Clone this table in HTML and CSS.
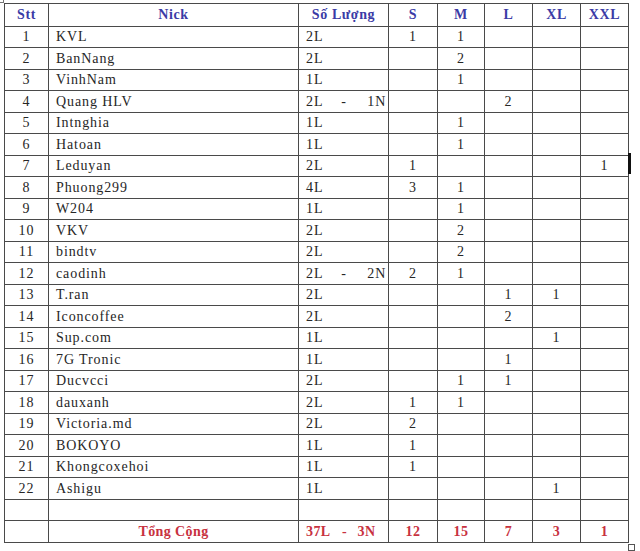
FILE: index.html
```html
<!DOCTYPE html>
<html lang="vi">
<head>
<meta charset="utf-8">
<title>Bảng size</title>
<link rel="stylesheet" href="styles.css">
</head>
<body>
<div class="page">
  <span class="move-handle"></span>
  <table class="sheet">
    <colgroup>
      <col class="c-stt"><col class="c-nick"><col class="c-qty"><col class="c-s"><col class="c-m"><col class="c-l"><col class="c-xl"><col class="c-xxl">
    </colgroup>
    <thead>
      <tr class="head">
        <th>Stt</th><th>Nick</th><th>Số Lượng</th><th>S</th><th>M</th><th>L</th><th>XL</th><th>XXL</th>
      </tr>
    </thead>
    <tbody>
      <tr><td class="n">1</td><td class="t">KVL</td><td class="q">2L</td><td class="n">1</td><td class="n">1</td><td></td><td></td><td></td></tr>
      <tr><td class="n">2</td><td class="t">BanNang</td><td class="q">2L</td><td></td><td class="n">2</td><td></td><td></td><td></td></tr>
      <tr><td class="n">3</td><td class="t">VinhNam</td><td class="q">1L</td><td></td><td class="n">1</td><td></td><td></td><td></td></tr>
      <tr><td class="n">4</td><td class="t">Quang HLV</td><td class="q">2L<span class="dash">-</span>1N</td><td></td><td></td><td class="n">2</td><td></td><td></td></tr>
      <tr><td class="n">5</td><td class="t">Intnghia</td><td class="q">1L</td><td></td><td class="n">1</td><td></td><td></td><td></td></tr>
      <tr><td class="n">6</td><td class="t">Hatoan</td><td class="q">1L</td><td></td><td class="n">1</td><td></td><td></td><td></td></tr>
      <tr><td class="n">7</td><td class="t">Leduyan</td><td class="q">2L</td><td class="n">1</td><td></td><td></td><td></td><td class="n">1</td></tr>
      <tr><td class="n">8</td><td class="t">Phuong299</td><td class="q">4L</td><td class="n">3</td><td class="n">1</td><td></td><td></td><td></td></tr>
      <tr><td class="n">9</td><td class="t">W204</td><td class="q">1L</td><td></td><td class="n">1</td><td></td><td></td><td></td></tr>
      <tr><td class="n">10</td><td class="t">VKV</td><td class="q">2L</td><td></td><td class="n">2</td><td></td><td></td><td></td></tr>
      <tr><td class="n">11</td><td class="t">bindtv</td><td class="q">2L</td><td></td><td class="n">2</td><td></td><td></td><td></td></tr>
      <tr><td class="n">12</td><td class="t">caodinh</td><td class="q">2L<span class="dash">-</span>2N</td><td class="n">2</td><td class="n">1</td><td></td><td></td><td></td></tr>
      <tr><td class="n">13</td><td class="t">T.ran</td><td class="q">2L</td><td></td><td></td><td class="n">1</td><td class="n">1</td><td></td></tr>
      <tr><td class="n">14</td><td class="t">Iconcoffee</td><td class="q">2L</td><td></td><td></td><td class="n">2</td><td></td><td></td></tr>
      <tr><td class="n">15</td><td class="t">Sup.com</td><td class="q">1L</td><td></td><td></td><td></td><td class="n">1</td><td></td></tr>
      <tr><td class="n">16</td><td class="t">7G Tronic</td><td class="q">1L</td><td></td><td></td><td class="n">1</td><td></td><td></td></tr>
      <tr><td class="n">17</td><td class="t">Ducvcci</td><td class="q">2L</td><td></td><td class="n">1</td><td class="n">1</td><td></td><td></td></tr>
      <tr><td class="n">18</td><td class="t">dauxanh</td><td class="q">2L</td><td class="n">1</td><td class="n">1</td><td></td><td></td><td></td></tr>
      <tr><td class="n">19</td><td class="t">Victoria.md</td><td class="q">2L</td><td class="n">2</td><td></td><td></td><td></td><td></td></tr>
      <tr><td class="n">20</td><td class="t">BOKOYO</td><td class="q">1L</td><td class="n">1</td><td></td><td></td><td></td><td></td></tr>
      <tr><td class="n">21</td><td class="t">Khongcoxehoi</td><td class="q">1L</td><td class="n">1</td><td></td><td></td><td></td><td></td></tr>
      <tr><td class="n">22</td><td class="t">Ashigu</td><td class="q">1L</td><td></td><td></td><td></td><td class="n">1</td><td></td></tr>
      <tr><td></td><td></td><td></td><td></td><td></td><td></td><td></td><td></td></tr>
      <tr class="total"><td></td><td class="n">Tổng Cộng</td><td class="q">37L<span class="dash-tight">-</span>3N</td><td class="n">12</td><td class="n">15</td><td class="n">7</td><td class="n">3</td><td class="n">1</td></tr>
    </tbody>
  </table>
  <span class="cursor-bar"></span>
  <span class="resize-handle"></span>
</div>
</body>
</html>
```

FILE: styles.css
```css
html, body {
  margin: 0;
  padding: 0;
  background: #ffffff;
}

.page {
  position: relative;
  padding: 3px 0 0 4px;
  width: 640px;
  height: 551px;
  box-sizing: border-box;
}

.sheet {
  border-collapse: collapse;
  table-layout: fixed;
  width: 625px;
  font-family: "Liberation Serif", "Times New Roman", serif;
  font-size: 14px;
  color: #262626;
  letter-spacing: 0.9px;
}

.c-stt { width: 44px; }
.c-nick { width: 250px; }
.c-qty { width: 90px; }
.c-s { width: 49px; }
.c-m { width: 47px; }
.c-l { width: 48px; }
.c-xl { width: 48px; }
.c-xxl { width: 48px; }

.sheet th,
.sheet td {
  border: 1px solid #4a4a4a;
  padding: 0;
  line-height: 16px;
  white-space: nowrap;
  overflow: hidden;
}

.head th {
  height: 22px;
  color: #3b3ba6;
  font-weight: bold;
  text-align: center;
  letter-spacing: 0.6px;
}

.sheet tbody tr { height: 21px; }
.sheet tbody tr:nth-child(even) { height: 22px; }

.n { text-align: center; }
.t { padding-left: 7px !important; text-align: left; }
.q { padding-left: 7px !important; text-align: left; }

.dash {
  display: inline-block;
  width: 26px;
  padding-left: 18px;
  text-align: left;
}

.dash-tight {
  display: inline-block;
  width: 26px;
  text-align: center;
  margin-left: 1px;
}

.total td {
  color: #c8323f;
  font-weight: bold;
  letter-spacing: 0.4px;
}

.move-handle {
  position: absolute;
  left: 0;
  top: 0;
  width: 4px;
  height: 3px;
  border-right: 1px solid #777;
  border-bottom: 1px solid #777;
  box-sizing: border-box;
}

.cursor-bar {
  position: absolute;
  left: 628px;
  top: 153px;
  width: 3px;
  height: 21px;
  background: #111;
}

.resize-handle {
  position: absolute;
  left: 628px;
  top: 544px;
  width: 7px;
  height: 7px;
  border: 1px solid #555;
  background: #fff;
  box-sizing: border-box;
}
```
